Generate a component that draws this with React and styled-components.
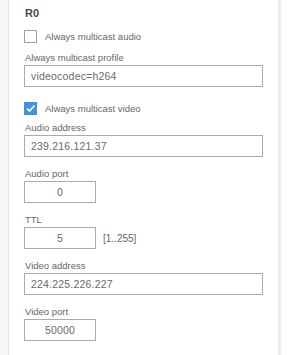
import styled, { createGlobalStyle } from "styled-components";

const GlobalStyle = createGlobalStyle`
  html, body {
    margin: 0;
    padding: 0;
    background: #ffffff;
  }
  body {
    font-family: "Liberation Sans", Arial, sans-serif;
  }
`;

const Page = styled.div`
  display: flex;
  height: 355px;
  width: 290px;
  overflow: hidden;
`;

const Gutter = styled.div`
  width: 8px;
  background: #f7f7f7;
`;

const Panel = styled.div`
  width: 270px;
  background: #ffffff;
  border-left: 1px solid #e3e3e3;
  padding: 6px 0 0 15px;
  box-sizing: border-box;
  display: flex;
  flex-direction: column;
`;

const Edge = styled.div`
  width: 4px;
  background: linear-gradient(to right, #e9e9e9, #f7f7f7);
`;

const Title = styled.div`
  font-size: 11px;
  line-height: 14px;
  font-weight: 700;
  color: #4a4a4a;
  padding-left: 1px;
`;

const CheckRow = styled.label`
  display: flex;
  align-items: center;
  gap: 8px;
  height: 13px;
  margin-top: ${(p) => p.$top}px;
  font-size: 9.5px;
  color: #666;
`;

const Box = styled.span`
  width: 13px;
  height: 13px;
  box-sizing: border-box;
  border: 1px solid ${(p) => (p.$checked ? "#4094d8" : "#a0a0a0")};
  background: ${(p) => (p.$checked ? "#4094d8" : "#fff")};
  display: flex;
  align-items: center;
  justify-content: center;
`;

const Field = styled.div`
  display: flex;
  flex-direction: column;
  margin-top: ${(p) => p.$top ?? 0}px;
  margin-bottom: 10px;
`;

const Label = styled.div`
  font-size: 9.5px;
  line-height: 14px;
  color: #666;
  padding-left: 1px;
`;

const Row = styled.div`
  display: flex;
  align-items: center;
  gap: 7px;
`;

const Input = styled.div`
  width: ${(p) => (p.$short ? "72px" : "239px")};
  height: 22px;
  box-sizing: border-box;
  border: 1px solid #ababab;
  font-size: 10.5px;
  letter-spacing: 0.2px;
  color: #6a6a6a;
  display: flex;
  align-items: center;
  justify-content: ${(p) => (p.$short ? "center" : "flex-start")};
  padding-left: ${(p) => (p.$short ? 0 : 6)}px;
`;

const Hint = styled.span`
  font-size: 10px;
  color: #666;
`;

function Check({ checked, top, children }) {
  return (
    <CheckRow $top={top}>
      <Box $checked={checked}>
        {checked && (
          <svg width="11" height="11" viewBox="0 0 11 11">
            <path d="M2 5.5 L4.5 8 L9.5 2.5" fill="none" stroke="#fff" strokeWidth="1.6" />
          </svg>
        )}
      </Box>
      {children}
    </CheckRow>
  );
}

export default function App() {
  return (
    <Page>
      <GlobalStyle />
      <Gutter />
      <Panel>
        <Title>R0</Title>
        <Check top={10}>Always multicast audio</Check>
        <Field $top={8}>
          <Label>Always multicast profile</Label>
          <Input>videocodec=h264</Input>
        </Field>
        <Check top={5} checked>
          Always multicast video
        </Check>
        <Field $top={6}>
          <Label>Audio address</Label>
          <Input>239.216.121.37</Input>
        </Field>
        <Field>
          <Label>Audio port</Label>
          <Input $short>0</Input>
        </Field>
        <Field>
          <Label>TTL</Label>
          <Row>
            <Input $short>5</Input>
            <Hint>[1..255]</Hint>
          </Row>
        </Field>
        <Field>
          <Label>Video address</Label>
          <Input>224.225.226.227</Input>
        </Field>
        <Field>
          <Label>Video port</Label>
          <Input $short>50000</Input>
        </Field>
      </Panel>
      <Edge />
    </Page>
  );
}
